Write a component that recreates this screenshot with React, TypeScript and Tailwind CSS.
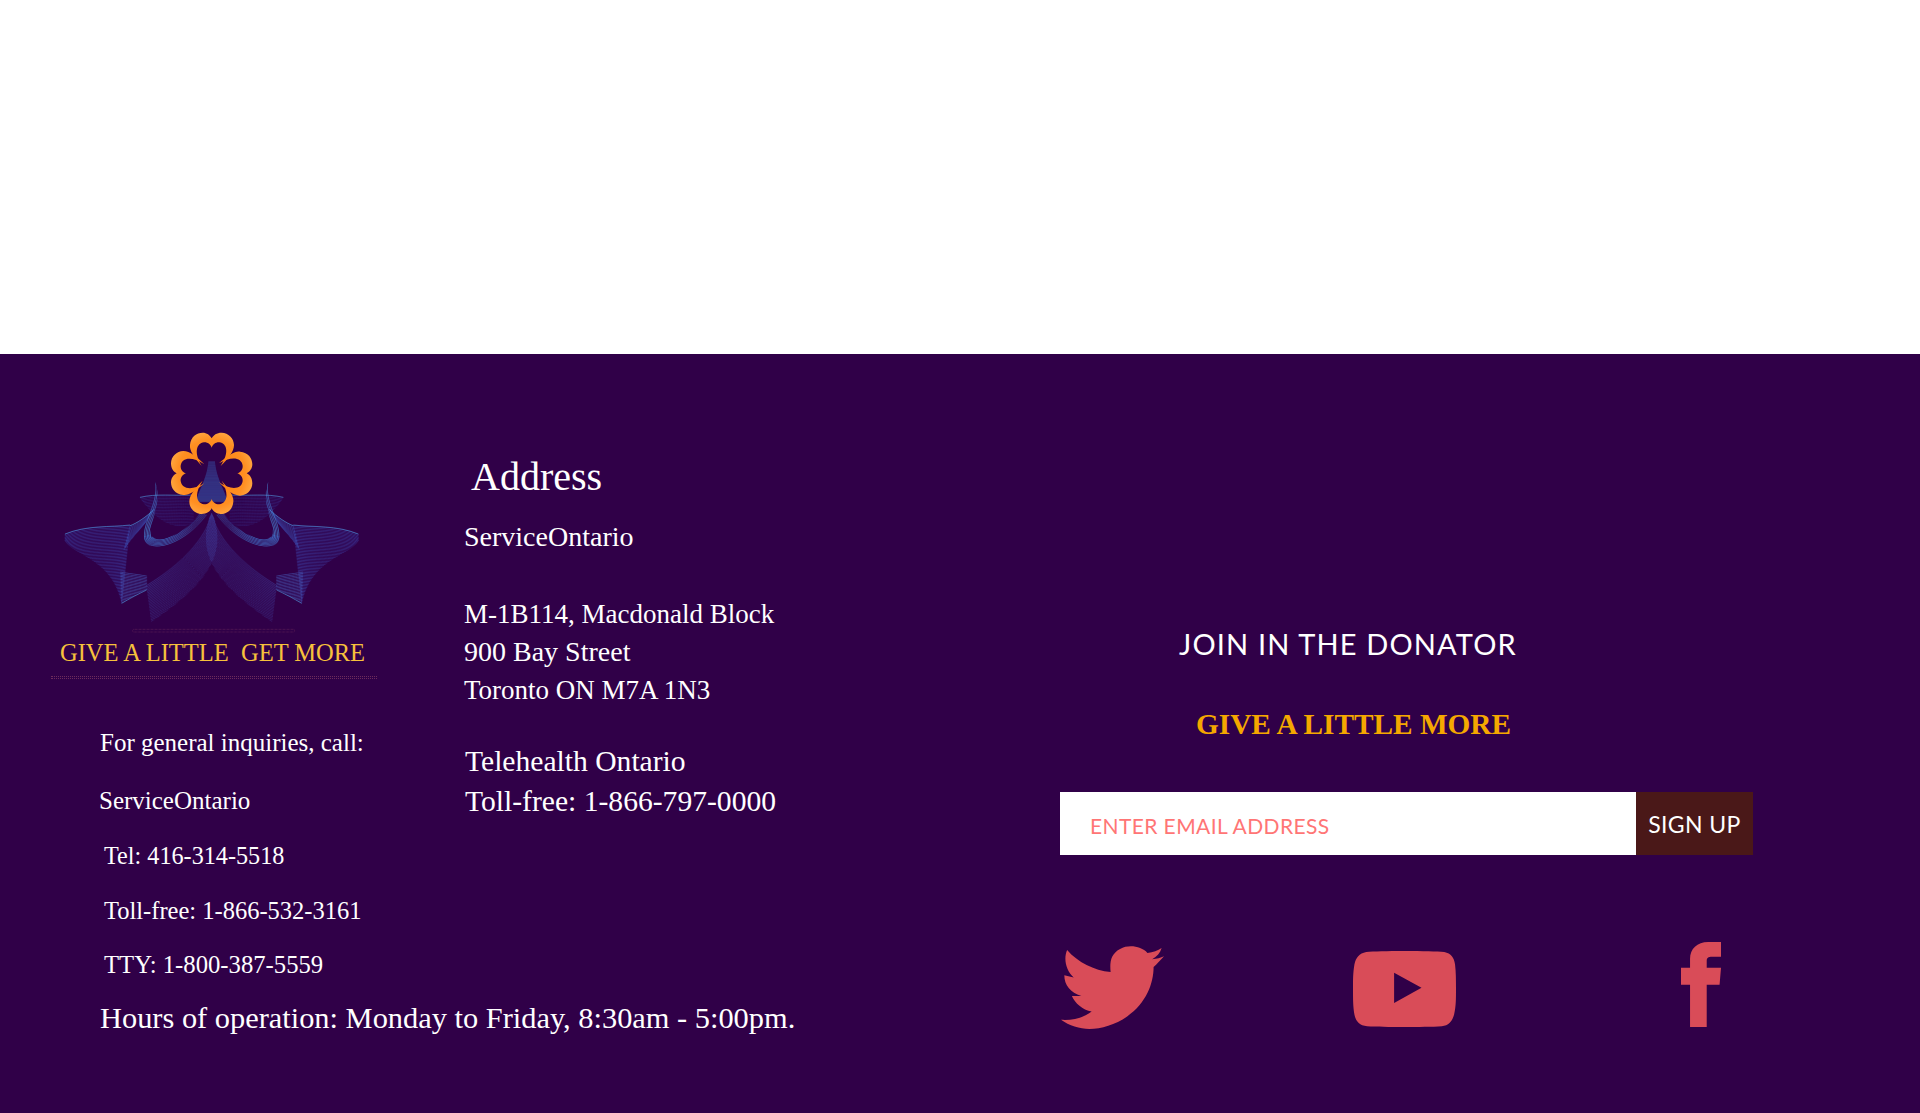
type P = [number, number];
type Curve = [P, P, P, P];

const at = (c: Curve, t: number): P => {
  const u = 1 - t;
  const f = (i: 0 | 1) => u * u * u * c[0][i] + 3 * u * u * t * c[1][i] + 3 * u * t * t * c[2][i] + t * t * t * c[3][i];
  return [f(0), f(1)];
};

const mesh = (a: Curve, b: Curve, n: number) => {
  let d = "";
  for (let i = 0; i <= n; i++) {
    const t = i / n;
    const p = at(a, t);
    const q = at(b, t);
    d += `M${p[0].toFixed(1)},${p[1].toFixed(1)}L${q[0].toFixed(1)},${q[1].toFixed(1)}`;
  }
  return d;
};

const edge = (c: Curve) => `M${c[0][0]},${c[0][1]}C${c[1][0]},${c[1][1]} ${c[2][0]},${c[2][1]} ${c[3][0]},${c[3][1]}`;

const ribbons: { a: Curve; b: Curve; n: number; o: number; c: string; bright?: "a" | "b" | "both" }[] = [
  { a: [[545, 310], [520, 400], [440, 470], [350, 525]], b: [[552, 325], [590, 440], [520, 530], [365, 635]], n: 150, o: 0.8, c: "#4a5cc0" },
  { a: [[105, 372], [170, 345], [240, 352], [300, 345]], b: [[105, 392], [135, 440], [245, 445], [275, 580]], n: 130, o: 0.7, c: "#3f4cb8", bright: "a" },
  { a: [[272, 485], [300, 490], [325, 492], [350, 497]], b: [[275, 580], [300, 565], [325, 552], [350, 540]], n: 45, o: 0.8, c: "#4f6fd0", bright: "b" },
  { a: [[300, 347], [320, 340], [350, 320], [372, 298]], b: [[282, 420], [300, 390], [325, 365], [345, 340]], n: 45, o: 0.65, c: "#4060c8", bright: "a" },
  { a: [[375, 215], [385, 280], [340, 330], [342, 380]], b: [[375, 215], [400, 280], [355, 340], [362, 375]], n: 110, o: 0.95, c: "#4a90e0" },
  { a: [[342, 380], [345, 430], [450, 420], [530, 315]], b: [[362, 375], [370, 400], [450, 390], [510, 310]], n: 170, o: 0.85, c: "#4478d0" },
  { a: [[330, 262], [380, 250], [430, 258], [490, 255]], b: [[335, 270], [370, 320], [430, 370], [490, 340]], n: 90, o: 0.45, c: "#4048b0", bright: "a" },
];

const heart =
  "M515,168 C490,140 478,120 480,105 C482,80 500,68 518,68 C530,68 540,75 545,85 C550,75 560,68 575,68 C595,68 612,85 612,105 C612,125 595,145 572,168 C598,130 592,100 568,97 C558,96 548,103 545,113 C542,103 532,96 522,97 C498,100 492,130 515,168 Z";

function Half() {
  return (
    <g fill="none">
      {ribbons.map((r, i) => (
        <g key={i}>
          <path d={mesh(r.a, r.b, r.n)} stroke={r.c} strokeWidth={1.3} strokeOpacity={r.o} strokeDasharray="2.5 2" />
          {(r.bright === "a" || r.bright === "both") && <path d={edge(r.a)} stroke="#55a8ea" strokeWidth={2.2} strokeOpacity={0.7} />}
          {(r.bright === "b" || r.bright === "both") && <path d={edge(r.b)} stroke="#55a8ea" strokeWidth={2.2} strokeOpacity={0.7} />}
        </g>
      ))}
    </g>
  );
}

function Logo() {
  return (
    <svg viewBox="0 0 1140 690" className="block w-[380px] h-[230px]">
      <defs>
        <radialGradient id="fl" gradientUnits="userSpaceOnUse" cx="545" cy="190" r="135">
          <stop offset="0.3" stopColor="#ff8314" />
          <stop offset="0.75" stopColor="#ff8f22" />
          <stop offset="1" stopColor="#ffac48" />
        </radialGradient>
      </defs>
      <Half />
      <g transform="matrix(-1 0 0 1 1090 0)">
        <Half />
      </g>
      <path d={mesh([[535, 155], [530, 210], [505, 240], [498, 275]], [[555, 155], [560, 210], [585, 240], [592, 275]], 70)} stroke="#3a62bd" strokeWidth={1.3} strokeOpacity={0.75} fill="none" />
      <g fill="url(#fl)">
        <path d={heart} />
        <path d={heart} transform="rotate(90 545 190)" />
        <path d={heart} transform="rotate(180 545 190)" />
        <path d={heart} transform="rotate(270 545 190)" />
      </g>
      <rect x="308" y="658" width="486" height="8" rx="3" fill="none" stroke="#6d2b5c" strokeWidth={2} strokeDasharray="2 2" />
    </svg>
  );
}

function Twitter() {
  return (
    <svg viewBox="45 70 218 258" preserveAspectRatio="none" className="w-[103px] h-[85px] shrink-0 ml-[1px]">
      <path fill="#d94c58" d="M58,88 C80,125 115,150 150,155 C148,125 150,100 170,85 C190,70 215,78 228,97 C240,95 250,90 258,82 C255,98 248,108 238,116 C248,115 256,112 263,107 C255,120 248,130 241,140 C241,190 225,250 185,290 C160,315 130,328 105,328 C85,328 62,318 45,300 C70,302 92,295 110,275 C90,270 75,250 68,228 L88,228 C65,218 52,195 52,165 L72,172 C55,150 50,115 58,88 Z" />
    </svg>
  );
}

function Youtube() {
  return (
    <svg viewBox="662 95 218 227" preserveAspectRatio="none" className="w-[103px] h-[76px] shrink-0 ml-[189px] mb-[2px]">
      <path fill="#d94c58" fillRule="evenodd" d="M770,95 C810,95 840,96 855,98 C870,102 876,115 878,135 C880,160 880,180 880,208 C880,240 880,260 876,285 C872,305 865,317 850,320 C830,322 800,322 770,322 C740,322 710,322 692,320 C675,317 668,305 665,285 C662,260 662,240 662,208 C662,180 662,160 665,135 C668,115 675,102 690,98 C705,96 735,95 770,95 Z M749,160 L807,205 L749,250 Z" />
    </svg>
  );
}

function Facebook() {
  return (
    <svg viewBox="1358 70 84 252" preserveAspectRatio="none" className="w-[40px] h-[85px] shrink-0 ml-[225px] mb-[2px]">
      <path fill="#d94c58" d="M1377,322 L1377,197 L1358,197 L1358,146 L1377,146 L1377,120 C1377,90 1392,70 1415,70 L1442,70 L1442,114 L1423,114 C1415,114 1412,118 1412,126 L1412,146 L1442,146 L1439,197 L1412,197 L1412,322 Z" />
    </svg>
  );
}

const serif = "font-['Liberation_Serif','Times_New_Roman',serif]";
const sans = "font-['Lato','Noto_Sans',sans-serif]";

export default function App() {
  return (
    <div className="min-h-[1113px] bg-white">
      <div className="h-[354px]" />
      <footer className={`h-[759px] bg-[#300048] flex text-white overflow-hidden ${serif}`}>
        <div className="w-[464px] shrink-0 pt-[56px] pl-[30px]">
          <Logo />
          <div className="ml-[30px] mt-[1px] w-[305px] h-[24px] leading-[24px] text-[24.5px] text-[#f7c13c] whitespace-pre">GIVE A LITTLE  GET MORE</div>
          <div className="ml-[21px] mt-[11px] w-[326px] h-[3px] border border-dotted border-[#6d2b5c]" />
          <div className="ml-[70px] mt-[52px] whitespace-nowrap">
            <p className="h-[24px] leading-[24px] text-[25px]">For general inquiries, call:</p>
            <p className="h-[24px] leading-[24px] text-[25px] mt-[34px] ml-[-1px]">ServiceOntario</p>
            <p className="h-[24px] leading-[24px] text-[24.2px] mt-[31px] ml-[4px]">Tel: 416-314-5518</p>
            <p className="h-[24px] leading-[24px] text-[24.5px] mt-[31px] ml-[4px]">Toll-free: 1-866-532-3161</p>
            <p className="h-[24px] leading-[24px] text-[24.7px] mt-[30px] ml-[4px]">TTY: 1-800-387-5559</p>
            <p className="h-[32px] leading-[32px] text-[30.4px] mt-[25px]">Hours of operation: Monday to Friday, 8:30am - 5:00pm.</p>
          </div>
        </div>
        <div className="w-[596px] shrink-0 pt-[101px] whitespace-nowrap">
          <h2 className="ml-[7px] h-[44px] leading-[44px] text-[40px]">Address</h2>
          <p className="mt-[23px] h-[30px] leading-[30px] text-[28px]">ServiceOntario</p>
          <div className="mt-[43px] leading-[38px] text-[27px]">
            <p>M-1B114, Macdonald Block</p>
            <p className="text-[28px]">900 Bay Street</p>
            <p>Toronto ON M7A 1N3</p>
          </div>
          <div className="mt-[32px] ml-[1px] leading-[40px] text-[29.6px]">
            <p>Telehealth Ontario</p>
            <p>Toll-free: 1-866-797-0000</p>
          </div>
        </div>
        <div className="flex-1 pt-[270px]">
          <h3 className={`ml-[119px] h-[40px] leading-[40px] text-[29px] tracking-[1.15px] whitespace-nowrap ${sans}`}>JOIN IN THE DONATOR</h3>
          <p className="ml-[136px] mt-[40px] h-[40px] leading-[40px] text-[29.3px] font-bold text-[#f5a800] whitespace-nowrap">GIVE A LITTLE MORE</p>
          <form className={`mt-[48px] flex w-[693px] h-[63px] ${sans}`}>
            <input
              type="email"
              placeholder="ENTER EMAIL ADDRESS"
              className="w-[576px] h-full bg-white pl-[30px] pt-[3px] text-[21px] tracking-[0.4px] outline-none placeholder:text-[#ff7575] placeholder:opacity-100"
            />
            <button type="button" className="flex-1 bg-[#4a1818] text-white text-[23px] tracking-[0.4px] pt-[2px] whitespace-nowrap">SIGN UP</button>
          </form>
          <div className="mt-[89px] flex items-end h-[85px]">
            <Twitter />
            <Youtube />
            <Facebook />
          </div>
        </div>
      </footer>
    </div>
  );
}
